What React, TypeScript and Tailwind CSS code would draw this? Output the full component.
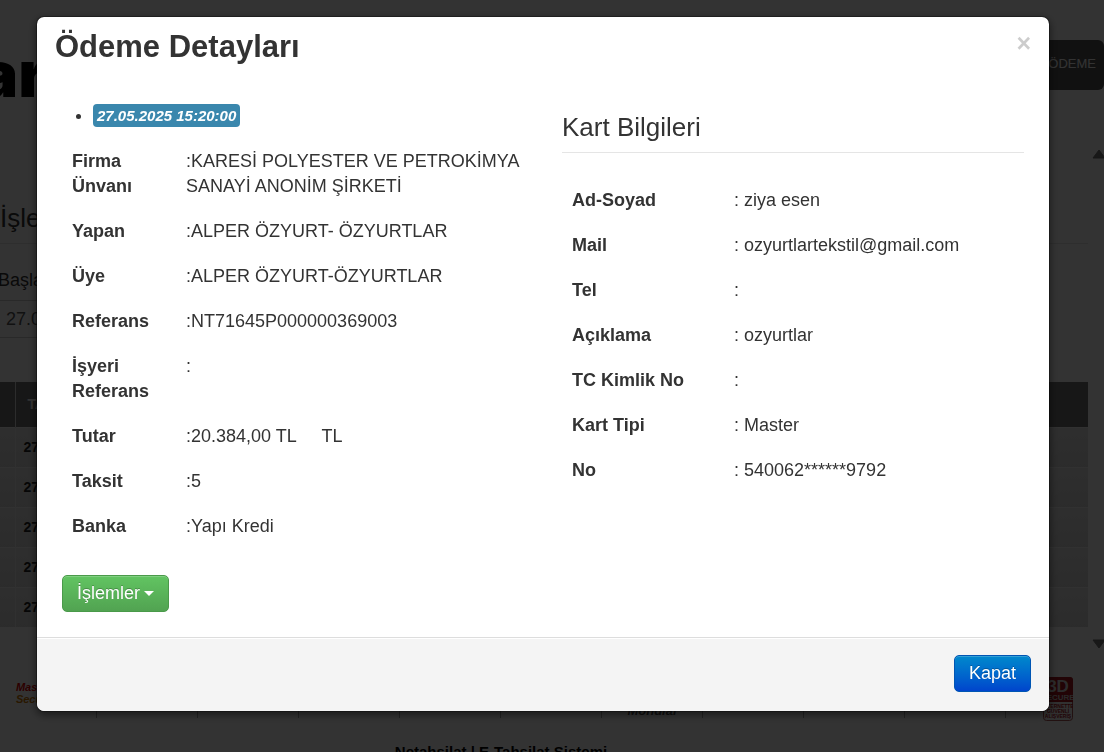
import type { ReactNode } from "react";

type Row = { label: string; value: string };

const paymentRows: Row[] = [
  { label: "Firma Ünvanı", value: ":KARESİ POLYESTER VE PETROKİMYA SANAYİ ANONİM ŞİRKETİ" },
  { label: "Yapan", value: ":ALPER ÖZYURT- ÖZYURTLAR" },
  { label: "Üye", value: ":ALPER ÖZYURT-ÖZYURTLAR" },
  { label: "Referans", value: ":NT71645P000000369003" },
  { label: "İşyeri Referans", value: ":" },
  { label: "Tutar", value: ":20.384,00 TL\u00a0\u00a0\u00a0\u00a0 TL" },
  { label: "Taksit", value: ":5" },
  { label: "Banka", value: ":Yapı Kredi" },
];

const cardRows: Row[] = [
  { label: "Ad-Soyad", value: ": ziya esen" },
  { label: "Mail", value: ": ozyurtlartekstil@gmail.com" },
  { label: "Tel", value: ":" },
  { label: "Açıklama", value: ": ozyurtlar" },
  { label: "TC Kimlik No", value: ":" },
  { label: "Kart Tipi", value: ": Master" },
  { label: "No", value: ": 540062******9792" },
];

const listDates = ["27.05.2025", "27.05.2025", "27.05.2025", "27.05.2025", "27.05.2025"];

function DetailTable({ rows, labelWidth }: { rows: Row[]; labelWidth: string }) {
  return (
    <table className="w-full table-fixed border-collapse">
      <tbody>
        {rows.map((row) => (
          <tr key={row.label} className="align-top">
            <th scope="row" className={`${labelWidth} p-[10px] text-left font-bold`}>
              {row.label}
            </th>
            <td className="py-[10px] pl-[10px]">{row.value}</td>
          </tr>
        ))}
      </tbody>
    </table>
  );
}

function LogoCell({ children }: { children?: ReactNode }) {
  return (
    <div className="flex h-full w-[101px] shrink-0 items-start justify-center border-r border-[#aaa]">
      {children}
    </div>
  );
}

function Secure3D() {
  return (
    <svg width="30" height="44" viewBox="0 0 30 44" className="mt-2 ml-1" aria-label="3D Secure">
      <rect x="0.5" y="0.5" width="29" height="43" rx="3" fill="#f4f4f4" stroke="#a55" />
      <path d="M0 3a3 3 0 0 1 3-3h24a3 3 0 0 1 3 3v22H0z" fill="#a8141e" />
      <g fontFamily="Liberation Sans Narrow, Liberation Sans, sans-serif" fontWeight="bold" textAnchor="middle">
        <text x="15" y="15" fontSize="17" fill="#ddd">3D</text>
        <text x="15" y="23" fontSize="8" fill="#ccc">SECURE</text>
        <text x="15" y="31" fontSize="5" fill="#a8141e">İNTERNETTE</text>
        <text x="15" y="36" fontSize="5" fill="#a8141e">GÜVENLİ</text>
        <text x="15" y="41" fontSize="5" fill="#a8141e">ALIŞVERİŞ</text>
      </g>
    </svg>
  );
}

function PaymentsPage() {
  return (
    <div className="flex h-screen flex-col overflow-hidden bg-white" aria-hidden="true">
      <header className="flex h-[149px] shrink-0 items-start justify-between pt-10">
        <div className="-ml-5 font-[Inter] text-[64px] leading-[68px] font-black text-black">ar</div>
        <nav className="flex h-[50px] w-1/2 items-center justify-end rounded-md bg-[#555] pr-2">
          <a href="#odeme" className="pb-1 text-[13px] text-white">ÖDEME</a>
        </nav>
      </header>

      <main className="flex shrink-0">
        <div className="grow pt-[51px]">
          <h2 className="border-b border-[#e5e5e5] pb-[7px] text-[26px] leading-9 text-[#333]">
            İşlemler
          </h2>
          <label htmlFor="start" className="-ml-0.5 mt-6 block leading-6 text-[#333]">Başlangıç</label>
          <input
            id="start"
            defaultValue="27.05.2025"
            className="mt-2 block h-[38px] w-48 border-y border-[#ccc] px-[6px] text-[#555]"
          />
          <table className="mt-11 w-full border-collapse text-[14px] leading-5">
            <thead>
              <tr className="h-[45px] bg-[#747474] text-left text-white">
                <th className="w-[15px] border-r border-[#ddd]" />
                <th className="pl-3">TARİH</th>
              </tr>
            </thead>
            <tbody>
              {listDates.map((date, i) => (
                <tr
                  key={i}
                  className="h-10 border-t border-[#f5f5f5] bg-linear-to-b from-[#e6e6e6] to-[#d8d8d8] font-bold text-[#222]"
                >
                  <td className="border-r border-[#eee]" />
                  <td className="pl-2">{date}</td>
                </tr>
              ))}
            </tbody>
          </table>
        </div>
        <div className="w-4 shrink-0 overflow-hidden pl-1">
          <svg width="14" height="10" viewBox="0 0 14 10">
            <path d="M7 1 13 9H1z" fill="#777" stroke="#777" strokeLinejoin="round" />
          </svg>
        </div>
      </main>

      <div className="flex h-[42px] shrink-0 justify-end overflow-hidden pt-3">
        <svg width="12" height="10" viewBox="0 0 12 10">
          <path d="M7 9 1 1h12z" fill="#777" stroke="#777" strokeLinejoin="round" />
        </svg>
      </div>

      <div className="-ml-1 flex h-[49px] shrink-0">
        <LogoCell>
          <div className="mt-3 pl-1 text-[11px] leading-3 font-bold italic">
            <div className="text-[#d00]">MasterCard</div>
            <div className="text-[#c70]">SecureCode</div>
          </div>
        </LogoCell>
        <LogoCell />
        <LogoCell />
        <LogoCell />
        <LogoCell />
        <LogoCell />
        <LogoCell>
          <div className="mt-[34px] text-[13px] leading-4 font-bold text-[#555] italic">Mondial</div>
        </LogoCell>
        <LogoCell />
        <LogoCell />
        <LogoCell />
        <LogoCell>
          <Secure3D />
        </LogoCell>
      </div>

      <footer className="mt-6 shrink-0 pr-[102px] text-center text-[15px] leading-5 font-bold text-black">
        Netahsilat | E-Tahsilat Sistemi
      </footer>
    </div>
  );
}

export default function App() {
  return (
    <div className="relative font-['Liberation_Sans',Arial,sans-serif] text-[18px] leading-[25px] text-[#333]">
      <PaymentsPage />

      <div className="fixed inset-0 overflow-hidden bg-black/80 pt-4 pr-[54px] pl-9">
        <div
          role="dialog"
          aria-labelledby="dialog-title"
          className="rounded-lg border border-black/30 bg-white bg-clip-padding shadow-[0_3px_9px_rgba(0,0,0,0.5)]"
        >
          <div className="flex items-start justify-between px-[18px] pt-[10px]">
            <h3 id="dialog-title" className="text-[31px] leading-10 font-bold">
              Ödeme Detayları
            </h3>
            <button type="button" aria-label="Kapat" className="pt-1 text-[25px] leading-6 font-bold text-black/20">
              ×
            </button>
          </div>

          <div className="grid grid-cols-2 gap-[38px] px-[25px] pt-[37px] pb-[25px]">
            <div>
              <ul className="list-disc pl-[31px] leading-[23px]">
                <li>
                  <span className="inline-block rounded bg-[#3a87ad] px-1 text-[15px] font-bold text-white italic">
                    27.05.2025 15:20:00
                  </span>
                </li>
              </ul>
              <div className="mt-3">
                <DetailTable rows={paymentRows} labelWidth="w-[114px]" />
              </div>
              <button
                type="button"
                className="mt-[26px] flex h-[37px] items-center gap-1 rounded-[5px] border border-[#4a9a4a] bg-linear-to-b from-[#62c462] to-[#51a351] px-[14px] text-white shadow-[inset_0_1px_0_rgba(255,255,255,0.2)] text-shadow-[0_-1px_0_rgba(0,0,0,0.25)]"
              >
                İşlemler
                <svg width="10" height="5" viewBox="0 0 10 5">
                  <path d="M0 0h10L5 5z" fill="#fff" />
                </svg>
              </button>
            </div>

            <div>
              <h4 className="mt-[3px] border-b border-[#e5e5e5] pb-[5px] text-[26px] leading-10">
                Kart Bilgileri
              </h4>
              <div className="mt-[25px]">
                <DetailTable rows={cardRows} labelWidth="w-[162px]" />
              </div>
            </div>
          </div>

          <div className="flex justify-end rounded-b-lg border-t border-[#ddd] bg-[#f4f4f4] px-[18px] pt-[17px] pb-[19px] shadow-[inset_0_1px_0_#fff]">
            <button
              type="button"
              className="h-[37px] rounded-[5px] border border-[#0055b3] bg-linear-to-b from-[#0088cc] to-[#0044cc] px-[14px] text-white shadow-[inset_0_1px_0_rgba(255,255,255,0.2)] text-shadow-[0_-1px_0_rgba(0,0,0,0.25)]"
            >
              Kapat
            </button>
          </div>
        </div>
      </div>
    </div>
  );
}
